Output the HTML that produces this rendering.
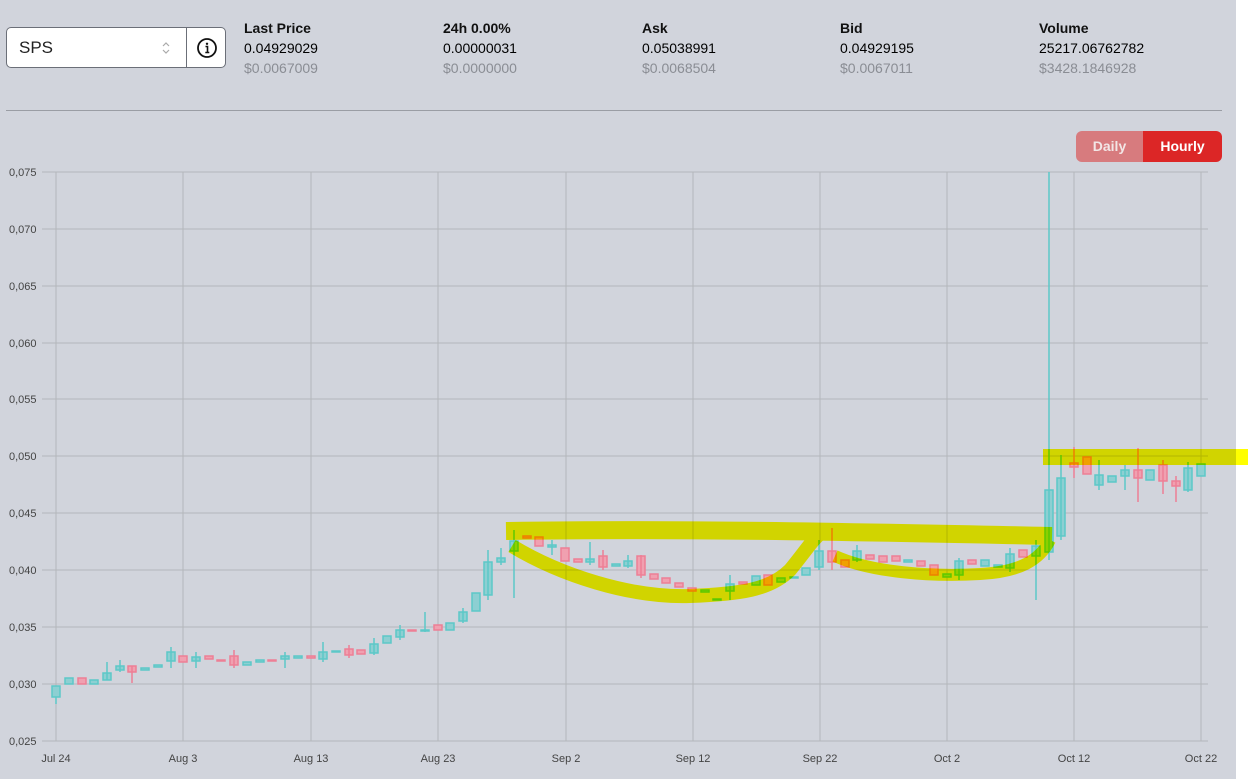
<!DOCTYPE html>
<html><head><meta charset="utf-8"><style>
body{margin:0;width:1248px;height:779px;background:#fff;font-family:"Liberation Sans",sans-serif;overflow:hidden;position:relative}
#pg{position:absolute;left:0;top:0;width:1236px;height:779px;background:#d1d4dc}
.sel{position:absolute;left:6px;top:27px;width:220px;height:41px;background:#fff;border:1px solid #6b6f78;border-radius:5px;box-sizing:border-box}
.sel .t{position:absolute;left:12px;top:10px;font-size:17px;color:#222}
.sel .div{position:absolute;left:179px;top:0;width:1px;height:39px;background:#6b6f78}
.st{position:absolute;top:18px;font-size:14px;line-height:20px}
.st b{color:#111}.st .g{color:#8a8d94}
.hr{position:absolute;left:6px;top:110px;width:1216px;height:1px;background:#9a9da4}
.btn{position:absolute;top:131px;height:31px;font-weight:bold;font-size:14px;line-height:31px;text-align:center}
</style></head><body><div id="pg"></div>
<div class="sel"><span class="t">SPS</span>
<svg style="position:absolute;left:154px;top:12px" width="10" height="16"><path d="M2 6l3-3 3 3M2 10l3 3 3-3" fill="none" stroke="#aaa" stroke-width="1.2"/></svg>
<div class="div"></div>
<svg style="position:absolute;left:189px;top:9px" width="22" height="22"><circle cx="11" cy="11" r="9" fill="none" stroke="#111" stroke-width="1.8"/><circle cx="11" cy="6.8" r="1.2" fill="#111"/><path d="M9.5 9.5h2v6M9.3 15.5h4" stroke="#111" stroke-width="1.6" fill="none"/></svg></div>
<div class="st" style="left:244px"><b>Last Price</b><br>0.04929029<br><span class="g">$0.0067009</span></div>
<div class="st" style="left:443px"><b>24h 0.00%</b><br>0.00000031<br><span class="g">$0.0000000</span></div>
<div class="st" style="left:642px"><b>Ask</b><br>0.05038991<br><span class="g">$0.0068504</span></div>
<div class="st" style="left:840px"><b>Bid</b><br>0.04929195<br><span class="g">$0.0067011</span></div>
<div class="st" style="left:1039px"><b>Volume</b><br>25217.06762782<br><span class="g">$3428.1846928</span></div>
<div class="hr"></div>
<div class="btn" style="left:1076px;width:67px;background:#d77b7e;color:#f2e6e6;border-radius:6px 0 0 6px">Daily</div>
<div class="btn" style="left:1143px;width:79px;background:#dc2626;color:#fff;border-radius:0 6px 6px 0">Hourly</div>
<svg style="position:absolute;left:0;top:0" width="1248" height="779" font-family="Liberation Sans" font-size="11" fill="#444">
<g stroke="#b4b6bb" stroke-width="1">
<path d="M42 172H1208M42 229H1208M42 286H1208M42 343H1208M42 399H1208M42 456H1208M42 513H1208M42 570H1208M42 627H1208M42 684H1208M42 741H1208"/>
<path d="M56 172V741M183 172V741M311 172V741M438 172V741M566 172V741M693 172V741M820 172V741M947 172V741M1074 172V741M1201 172V741"/>
</g>
<g>
<text x="9" y="176">0,075</text><text x="9" y="233">0,070</text><text x="9" y="290">0,065</text><text x="9" y="347">0,060</text><text x="9" y="403">0,055</text><text x="9" y="460">0,050</text><text x="9" y="517">0,045</text><text x="9" y="574">0,040</text><text x="9" y="631">0,035</text><text x="9" y="688">0,030</text><text x="9" y="745">0,025</text>
</g>
<g text-anchor="middle"><text x="56" y="762">Jul 24</text><text x="183" y="762">Aug 3</text><text x="311" y="762">Aug 13</text><text x="438" y="762">Aug 23</text><text x="566" y="762">Sep 2</text><text x="693" y="762">Sep 12</text><text x="820" y="762">Sep 22</text><text x="947" y="762">Oct 2</text><text x="1074" y="762">Oct 12</text><text x="1201" y="762">Oct 22</text></g>
<g id="c" stroke-width="1.5">
<g stroke="#5cc8c8" fill="#8dcfd2">
<rect x="52" y="686" width="8" height="11"/><rect x="65" y="678" width="8" height="6"/><rect x="90" y="680" width="8" height="4"/><rect x="103" y="673" width="8" height="7"/><rect x="116" y="666" width="8" height="4"/><rect x="141" y="668" width="8" height="2"/><rect x="154" y="665" width="8" height="2"/><rect x="167" y="652" width="8" height="9"/><rect x="192" y="657" width="8" height="4"/><rect x="243" y="662" width="8" height="3"/><rect x="256" y="660" width="8" height="2"/><rect x="281" y="656" width="8" height="3"/><rect x="294" y="656" width="8" height="2"/><rect x="319" y="652" width="8" height="7"/><rect x="332" y="651" width="8" height="1"/><rect x="370" y="644" width="8" height="9"/><rect x="383" y="636" width="8" height="7"/><rect x="396" y="630" width="8" height="7"/><rect x="421" y="630" width="8" height="1"/><rect x="446" y="623" width="8" height="7"/><rect x="459" y="612" width="8" height="9"/><rect x="472" y="593" width="8" height="18"/><rect x="484" y="562" width="8" height="33"/><rect x="497" y="558" width="8" height="4"/><rect x="510" y="541" width="8" height="10"/><rect x="548" y="545" width="8" height="2"/><rect x="586" y="559" width="8" height="3"/><rect x="612" y="564" width="8" height="2"/><rect x="624" y="561" width="8" height="5"/><rect x="701" y="590" width="8" height="2"/><rect x="713" y="599" width="8" height="1"/><rect x="726" y="584" width="8" height="7"/><rect x="752" y="576" width="8" height="9"/><rect x="777" y="578" width="8" height="4"/><rect x="790" y="577" width="8" height="1"/><rect x="802" y="568" width="8" height="7"/><rect x="815" y="551" width="8" height="16"/><rect x="853" y="551" width="8" height="9"/><rect x="904" y="560" width="8" height="2"/><rect x="943" y="574" width="8" height="3"/><rect x="955" y="561" width="8" height="14"/><rect x="981" y="560" width="8" height="6"/><rect x="994" y="565" width="8" height="2"/><rect x="1006" y="554" width="8" height="14"/><rect x="1032" y="546" width="8" height="10"/><rect x="1045" y="490" width="8" height="62"/><rect x="1057" y="478" width="8" height="58"/><rect x="1095" y="475" width="8" height="10"/><rect x="1108" y="476" width="8" height="6"/><rect x="1121" y="470" width="8" height="6"/><rect x="1146" y="470" width="8" height="10"/><rect x="1184" y="468" width="8" height="22"/><rect x="1197" y="464" width="8" height="12"/>
<path d="M1049 172V560M1061 455V540M514 530V598M488 550V600M730 575V600M1036 540V600M1125 465V490M1099 460V490M56 697V704M107 662V680M120 660V672M171 647V668M196 652V668M285 652V668M323 642V662M374 638V655M400 625V640M425 612V632M463 608V623M501 548V565M552 540V555M590 542V565M628 555V568M819 540V570M857 545V562M959 558V580M1010 548V572M1188 462V492"/>
</g>
<g stroke="#ee7f95" fill="#f0a0b0">
<rect x="78" y="678" width="8" height="6"/><rect x="128" y="666" width="8" height="6"/><rect x="179" y="656" width="8" height="6"/><rect x="205" y="656" width="8" height="3"/><rect x="217" y="660" width="8" height="1"/><rect x="230" y="656" width="8" height="9"/><rect x="268" y="660" width="8" height="1"/><rect x="307" y="656" width="8" height="2"/><rect x="345" y="649" width="8" height="6"/><rect x="357" y="650" width="8" height="4"/><rect x="408" y="630" width="8" height="1"/><rect x="434" y="625" width="8" height="5"/><rect x="523" y="536" width="8" height="2"/><rect x="535" y="537" width="8" height="9"/><rect x="561" y="548" width="8" height="13"/><rect x="574" y="559" width="8" height="3"/><rect x="599" y="556" width="8" height="11"/><rect x="637" y="556" width="8" height="19"/><rect x="650" y="574" width="8" height="5"/><rect x="662" y="578" width="8" height="5"/><rect x="675" y="583" width="8" height="4"/><rect x="688" y="588" width="8" height="3"/><rect x="739" y="582" width="8" height="2"/><rect x="764" y="575" width="8" height="10"/><rect x="828" y="551" width="8" height="11"/><rect x="841" y="560" width="8" height="7"/><rect x="866" y="555" width="8" height="4"/><rect x="879" y="556" width="8" height="6"/><rect x="892" y="556" width="8" height="5"/><rect x="917" y="561" width="8" height="5"/><rect x="930" y="565" width="8" height="10"/><rect x="968" y="560" width="8" height="4"/><rect x="1019" y="550" width="8" height="7"/><rect x="1070" y="463" width="8" height="4"/><rect x="1083" y="457" width="8" height="17"/><rect x="1134" y="470" width="8" height="8"/><rect x="1159" y="465" width="8" height="16"/><rect x="1172" y="481" width="8" height="5"/>
<path d="M832 528V570M1074 447V478M1138 448V502M1176 476V502M132 666V683M234 650V668M349 645V658M603 550V570M641 555V578M1163 460V494"/>
</g>
</g>
<g fill="none" stroke="#ffff00" style="mix-blend-mode:multiply" stroke-linecap="butt">
<path d="M506 531C700 528 900 533 1052 536" stroke-width="18"/>
<path d="M512 546C560 575 630 598 690 596C740 594 770 590 790 570C805 552 812 540 822 532" stroke-width="14"/>
<path d="M835 556C870 572 930 577 980 574C1020 572 1040 560 1050 540" stroke-width="12"/>
<path d="M1043 457H1248" stroke-width="16"/>
</g>
</svg>
</body></html>
